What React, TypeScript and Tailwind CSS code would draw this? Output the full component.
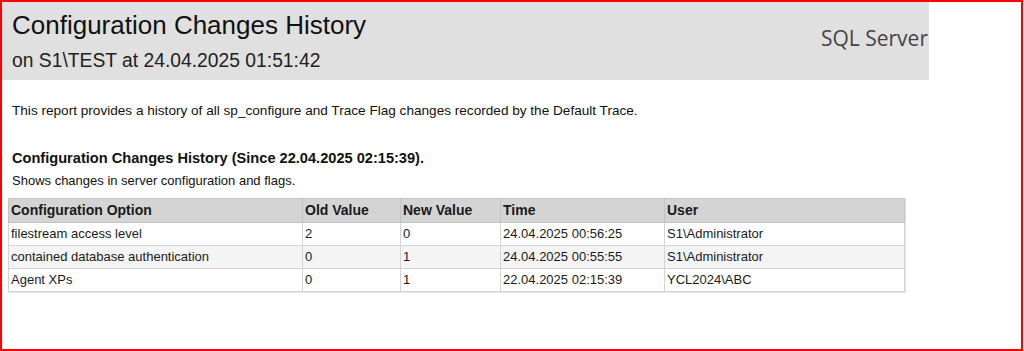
import React from 'react';

const rows = [
  { option: 'filestream access level', oldValue: '2', newValue: '0', time: '24.04.2025 00:56:25', user: 'S1\\Administrator' },
  { option: 'contained database authentication', oldValue: '0', newValue: '1', time: '24.04.2025 00:55:55', user: 'S1\\Administrator' },
  { option: 'Agent XPs', oldValue: '0', newValue: '1', time: '22.04.2025 02:15:39', user: 'YCL2024\\ABC' },
];

const App: React.FC = () => {
  return (
    <div className="w-[1023px] h-[351px] border-2 border-[#ff0000] bg-white font-['Liberation_Sans',Arial,sans-serif] text-[#1a1a1a] overflow-hidden">
      {/* Report header band */}
      <div className="w-[927px] h-[78px] bg-[#e0e0e0] flex justify-between">
        <div className="pl-[10px] pt-[8px]">
          <h1 className="text-[26px] leading-[30px] text-[#111]">Configuration Changes History</h1>
          <p className="text-[19.3px] leading-[22px] mt-[10px] text-[#222]">on S1\TEST at 24.04.2025 01:51:42</p>
        </div>
        <div className="pt-[22px] pr-[1px] text-[21px] leading-[28px] text-[#444] font-['Open_Sans',sans-serif]">SQL Server</div>
      </div>

      <p className="pl-[10px] mt-[23px] text-[13.6px] leading-[16px] text-[#111]">
        This report provides a history of all sp_configure and Trace Flag changes recorded by the Default Trace.
      </p>

      <h2 className="pl-[10px] mt-[31px] text-[14.6px] leading-[17px] font-bold text-[#111]">
        Configuration Changes History (Since 22.04.2025 02:15:39).
      </h2>
      <p className="pl-[10px] mt-[6px] text-[13px] leading-[16px] text-[#111]">Shows changes in server configuration and flags.</p>

      <table className="ml-[6px] mt-[9px] border-collapse border border-[#c4c4c4] text-[13px] text-[#1a1a1a] shadow-[1px_1px_0_#e6e6e6]">
        <thead>
          <tr className="bg-[#d4d4d4] h-[24px]">
            <th className="w-[294px] border border-[#c4c4c4] text-left font-bold text-[14px] px-[2px]">Configuration Option</th>
            <th className="w-[98px] border border-[#c4c4c4] text-left font-bold text-[14px] px-[2px]">Old Value</th>
            <th className="w-[100px] border border-[#c4c4c4] text-left font-bold text-[14px] px-[2px]">New Value</th>
            <th className="w-[164px] border border-[#c4c4c4] text-left font-bold text-[14px] px-[2px]">Time</th>
            <th className="w-[240px] border border-[#c4c4c4] text-left font-bold text-[14px] px-[2px]">User</th>
          </tr>
        </thead>
        <tbody>
          {rows.map((r, i) => (
            <tr key={r.option} className={`h-[23px] ${i === 1 ? 'bg-[#f4f4f4]' : 'bg-white'}`}>
              <td className="border border-[#d4d4d4] px-[2px]">{r.option}</td>
              <td className="border border-[#d4d4d4] px-[2px]">{r.oldValue}</td>
              <td className="border border-[#d4d4d4] px-[2px]">{r.newValue}</td>
              <td className="border border-[#d4d4d4] px-[2px]">{r.time}</td>
              <td className="border border-[#d4d4d4] px-[2px]">{r.user}</td>
            </tr>
          ))}
        </tbody>
      </table>
    </div>
  );
};

export default App;
